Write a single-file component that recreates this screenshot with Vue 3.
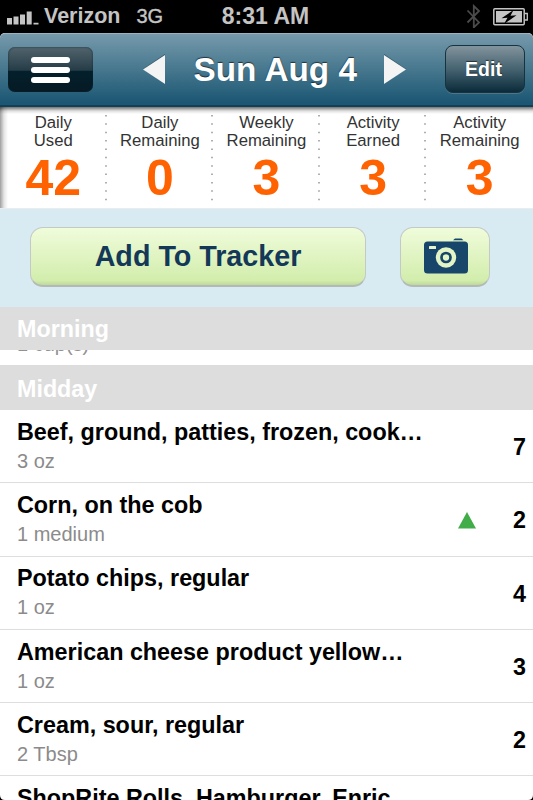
<script setup>
    import { ref } from 'vue';

    const date = ref('Sun Aug 4');

    const stats = ref([
        { top: 'Daily', bottom: 'Used', value: 42 },
        { top: 'Daily', bottom: 'Remaining', value: 0 },
        { top: 'Weekly', bottom: 'Remaining', value: 3 },
        { top: 'Activity', bottom: 'Earned', value: 3 },
        { top: 'Activity', bottom: 'Remaining', value: 3 }
    ]);

    const foods = ref([
        { name: 'Beef, ground, patties, frozen, cook…', amount: '3 oz', points: 7 },
        { name: 'Corn, on the cob', amount: '1 medium', points: 2, power: true },
        { name: 'Potato chips, regular', amount: '1 oz', points: 4 },
        { name: 'American cheese product yellow…', amount: '1 oz', points: 3 },
        { name: 'Cream, sour, regular', amount: '2 Tbsp', points: 2 },
        { name: 'ShopRite Rolls, Hamburger, Enric…', amount: '', points: '' }
    ]);
</script>

<template>
    <div class="screen">
        <div class="status">
            <div class="status__left">
                <svg class="status__signal" width="32" height="14" viewBox="0 0 32 14">
                    <path d="M0 7h5v6.5H0zM6.5 5.5h5v8h-5zM13 3.5h5v10h-5zM19.700 0.500h5v13h-5zM26.500 11.800h5v1.700h-5z" />
                </svg>
                <span class="status__carrier">Verizon</span>
                <span class="status__network">3G</span>
            </div>
            <div class="status__time">8:31 AM</div>
            <div class="status__right">
                <svg width="16" height="26" viewBox="0 0 16 26">
                    <path d="M1.500 6.500L13 18.500L7.800 23.500V2L13 7L1.500 18.500" fill="none" stroke="#4b4b4b" stroke-width="1.800" />
                </svg>
                <svg class="status__battery" width="36" height="18" viewBox="0 0 36 18">
                    <rect x="0.800" y="0.800" width="30.400" height="15.900" rx="1" fill="none" stroke="#c4c4c4" stroke-width="1.500" />
                    <rect x="3" y="3" width="26" height="11.500" fill="#c4c4c4" />
                    <path d="M32 5.500h2.300v6.500H32" fill="none" stroke="#c4c4c4" stroke-width="1.300" />
                    <path d="M20.500 2L8.500 10.200L14.500 9.700L11 16L23.500 7.200L17.500 7.700z" fill="#000" />
                </svg>
            </div>
        </div>

        <div class="nav">
            <div class="nav__menu">
                <div class="nav__line"></div>
                <div class="nav__line"></div>
                <div class="nav__line"></div>
            </div>
            <div class="nav__date">
                <svg class="nav__arrow" width="23" height="31" viewBox="0 0 23 31">
                    <path d="M22 0L0 15L22 30z" fill="#345767" />
                    <path d="M22 1L0 15.500L22 30z" fill="#f4f4f4" />
                </svg>
                <span class="nav__title">{{ date }}</span>
                <svg class="nav__arrow" width="23" height="31" viewBox="0 0 23 31">
                    <path d="M0 0L22 15L0 30z" fill="#345767" />
                    <path d="M0 1L22 15.500L0 30z" fill="#f4f4f4" />
                </svg>
            </div>
            <div class="nav__edit">Edit</div>
        </div>

        <div class="stats">
            <div v-for="(stat, i) in stats" :key="i" class="stats__item">
                <div class="stats__label">{{ stat.top }}<br>{{ stat.bottom }}</div>
                <div class="stats__value">{{ stat.value }}</div>
                <svg v-if="i < 4" class="stats__dots" width="2" height="88" viewBox="0 0 2 88">
                    <path d="M1 0V88" stroke="#8e8e8e" stroke-width="1.400" stroke-dasharray="1.500 6.870" />
                </svg>
            </div>
        </div>

        <div class="actions">
            <div class="button button--add">Add To Tracker</div>
            <div class="button button--camera">
                <svg width="44" height="36" viewBox="0 0 44 36">
                    <path d="M29 2.200L31 0.500H37.500L39.500 2.200z" fill="#17466a" />
                    <rect x="0" y="3.500" width="44" height="32" rx="3.500" fill="#17466a" />
                    <rect x="5" y="8" width="7" height="3" rx="0.500" fill="#e8f6cf" />
                    <circle cx="22" cy="19.500" r="10.200" fill="#e3f4c6" />
                    <circle cx="22" cy="19.500" r="4.500" fill="none" stroke="#17466a" stroke-width="2.700" />
                </svg>
            </div>
        </div>

        <div class="section section--morning">Morning</div>
        <div class="peek">
            <div class="peek__text">1 cup(s)</div>
        </div>
        <div class="section section--midday">Midday</div>

        <div class="list">
            <div v-for="food in foods" :key="food.name" class="food">
                <div class="food__info">
                    <div class="food__name">{{ food.name }}</div>
                    <div class="food__amount">{{ food.amount }}</div>
                </div>
                <svg v-if="food.power" class="food__power" width="18" height="17" viewBox="0 0 18 17">
                    <path d="M9 0L18 16.500H0z" fill="#41ad49" />
                </svg>
                <div class="food__points">{{ food.points }}</div>
            </div>
        </div>

        <svg class="corner corner--left" width="5" height="5" viewBox="0 0 5 5">
            <path d="M0 0Q0 5 5 5H0z" />
        </svg>
        <svg class="corner corner--right" width="5" height="5" viewBox="0 0 5 5">
            <path d="M5 0Q5 5 0 5H5z" />
        </svg>
    </div>
</template>

<style>
    body {
        margin: 0;
        overflow: hidden;
    }
</style>

<style scoped>
    .screen {
        position: relative;
        display: flex;
        flex-direction: column;
        width: 533px;
        height: 800px;
        overflow: hidden;
        background: #fff;
        font-family: "Liberation Sans", Arial, sans-serif;
        white-space: nowrap;
    }

    .status {
        display: grid;
        grid-template-columns: 1fr auto 1fr;
        align-items: center;
        flex: none;
        height: 33px;
        background: #000;
        color: #c4c4c4;
        font-size: 21.500px;
        font-weight: 700;
    }

    .status__left {
        display: flex;
        align-items: center;
        padding-left: 7px;
    }

    .status__signal {
        margin-top: 2px;
        fill: #c4c4c4;
    }

    .status__carrier {
        margin-left: 5px;
    }

    .status__network {
        margin-left: 16px;
        font-size: 20px;
        font-weight: 400;
        -webkit-text-stroke: 0.4px #c4c4c4;
    }

    .status__time {
        padding-right: 2px;
        font-size: 23px;
    }

    .status__right {
        display: flex;
        align-items: center;
        justify-content: flex-end;
        padding-right: 4px;
    }

    .status__battery {
        margin-left: 11px;
    }

    .nav {
        display: flex;
        align-items: center;
        justify-content: space-between;
        flex: none;
        box-sizing: border-box;
        height: 74px;
        padding: 0 8px;
        background: linear-gradient(#7699ab, #4b7b91 45%, #1b5673 97%);
        border-top: 1px solid #9ab3c0;
        border-bottom: 2px solid #123f56;
        border-radius: 5px 5px 0 0;
        box-shadow: 0 -5px 0 #000;
        color: #fff;
    }

    .nav__menu {
        display: flex;
        flex-direction: column;
        align-items: center;
        justify-content: center;
        gap: 4px;
        width: 85px;
        height: 45px;
        background: linear-gradient(#52646d, #253c47 52%, #03202c 53%, #061a24);
        border-radius: 7px;
        box-shadow: inset 0 0 2px #102934;
    }

    .nav__line {
        width: 39px;
        height: 6px;
        border-radius: 3px;
        background: #fff;
    }

    .nav__date {
        display: flex;
        align-items: center;
        padding-left: 11px;
    }

    .nav__title {
        width: 163px;
        margin: 0 27px 0 28px;
        font-size: 33.300px;
        font-weight: 700;
        text-shadow: 0 -1px 1px rgba(0, 0, 0, 0.6);
    }

    .nav__edit {
        box-sizing: border-box;
        width: 80px;
        height: 48px;
        margin-bottom: 2px;
        padding-right: 3px;
        font-size: 19.500px;
        font-weight: 700;
        line-height: 46px;
        text-align: center;
        text-shadow: 0 -1px 1px rgba(0, 0, 0, 0.6);
        background: linear-gradient(#83949d, #456371 50%, #0b2b3a);
        border: 1px solid #17333f;
        border-radius: 8px;
        box-shadow: 0 1px 0 #4c7589;
    }

    .stats {
        display: grid;
        grid-template-columns: repeat(5, 106.600px);
        flex: none;
        height: 101px;
        border-bottom: 1px solid #e9edef;
        background:
            linear-gradient(rgba(0, 0, 0, 0.55), rgba(0, 0, 0, 0.12) 4px, transparent 7px),
            linear-gradient(90deg, rgba(0, 0, 0, 0.38), rgba(0, 0, 0, 0.1) 4px, transparent 8px),
            #fff;
    }

    .stats__item {
        position: relative;
        padding-top: 7px;
        text-align: center;
    }

    .stats__label {
        color: #333;
        font-size: 16.700px;
        line-height: 18.300px;
    }

    .stats__value {
        color: #ff6200;
        font-size: 50px;
        font-weight: 700;
        line-height: 54px;
    }

    .stats__dots {
        position: absolute;
        top: 8px;
        right: 0;
    }

    .actions {
        display: flex;
        gap: 34px;
        flex: none;
        box-sizing: border-box;
        height: 98px;
        padding: 18px 0 0 30px;
        background: #d8eaf2;
    }

    .button {
        display: flex;
        align-items: center;
        justify-content: center;
        box-sizing: border-box;
        height: 60px;
        background: linear-gradient(#f0fcdb, #d2edac 92%, #bed99a);
        border: 1px solid #c4c9c6;
        border-bottom: 2px solid #b3b9b6;
        border-radius: 13px;
    }

    .button--add {
        width: 336px;
        color: #143858;
        font-size: 28.700px;
        font-weight: 700;
    }

    .button--camera {
        width: 90px;
        padding: 0 0 2px 2px;
    }

    .section {
        flex: none;
        box-sizing: border-box;
        padding-left: 17px;
        background: #ddd;
        color: #fff;
        font-size: 23.300px;
        font-weight: 700;
    }

    .section--morning {
        height: 43px;
        line-height: 44px;
    }

    .section--midday {
        height: 45px;
        line-height: 48px;
    }

    .peek {
        display: flex;
        align-items: flex-start;
        flex: none;
        height: 15px;
        overflow: hidden;
    }

    .peek__text {
        margin-top: -17px;
        padding-left: 17px;
        color: #929292;
        font-size: 20px;
        line-height: 23px;
    }

    .list {
        flex: none;
    }

    .food {
        display: flex;
        align-items: center;
        box-sizing: border-box;
        height: 73.300px;
        padding: 0 7px 0 17px;
        border-bottom: 1.500px solid #dedede;
    }

    .food__info {
        flex: 1;
        height: 73px;
        box-sizing: border-box;
        padding-top: 8px;
    }

    .food__name {
        font-size: 23.350px;
        font-weight: 700;
        line-height: 28px;
    }

    .food__amount {
        margin-top: 4px;
        color: #8b8b8b;
        font-size: 20px;
        line-height: 23px;
    }

    .food__power {
        margin: 2px 37px 0 0;
    }

    .food__points {
        padding-top: 3px;
        font-size: 23.300px;
        font-weight: 700;
    }

    .corner {
        position: absolute;
        bottom: 0;
    }

    .corner--left {
        left: 0;
    }

    .corner--right {
        right: 0;
    }
</style>
